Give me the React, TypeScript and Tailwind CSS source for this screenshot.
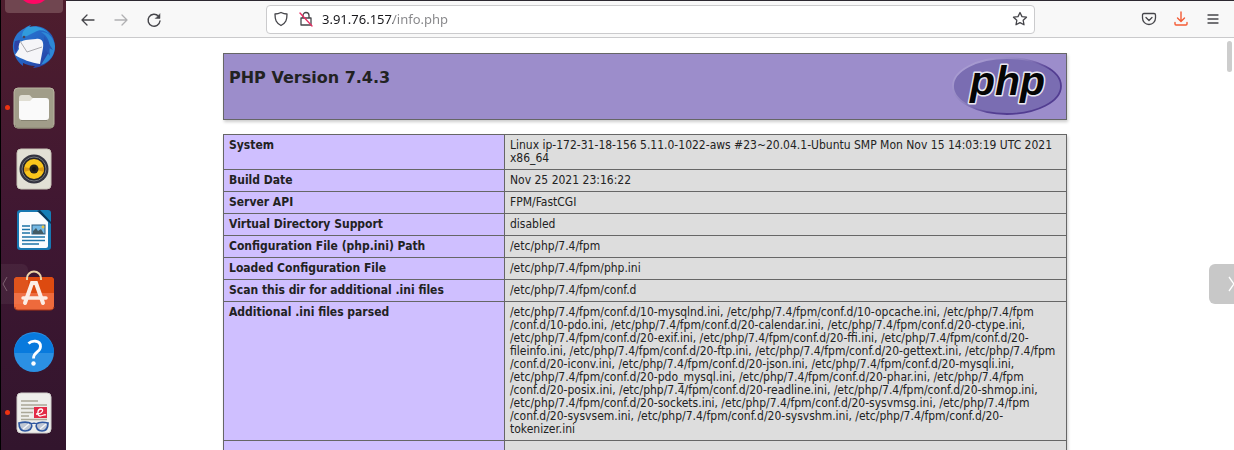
import React from "react";

type Row = { name: string; value: React.ReactNode };

const ROWS: Row[] = [
  { name: "System", value: "Linux ip-172-31-18-156 5.11.0-1022-aws #23~20.04.1-Ubuntu SMP Mon Nov 15 14:03:19 UTC 2021 x86_64" },
  { name: "Build Date", value: "Nov 25 2021 23:16:22" },
  { name: "Server API", value: "FPM/FastCGI" },
  { name: "Virtual Directory Support", value: "disabled" },
  { name: "Configuration File (php.ini) Path", value: "/etc/php/7.4/fpm" },
  { name: "Loaded Configuration File", value: "/etc/php/7.4/fpm/php.ini" },
  { name: "Scan this dir for additional .ini files", value: "/etc/php/7.4/fpm/conf.d" },
];

const INI_LINES = [
  "/etc/php/7.4/fpm/conf.d/10-mysqlnd.ini, /etc/php/7.4/fpm/conf.d/10-opcache.ini, /etc/php/7.4/fpm",
  "/conf.d/10-pdo.ini, /etc/php/7.4/fpm/conf.d/20-calendar.ini, /etc/php/7.4/fpm/conf.d/20-ctype.ini,",
  "/etc/php/7.4/fpm/conf.d/20-exif.ini, /etc/php/7.4/fpm/conf.d/20-ffi.ini, /etc/php/7.4/fpm/conf.d/20-",
  "fileinfo.ini, /etc/php/7.4/fpm/conf.d/20-ftp.ini, /etc/php/7.4/fpm/conf.d/20-gettext.ini, /etc/php/7.4/fpm",
  "/conf.d/20-iconv.ini, /etc/php/7.4/fpm/conf.d/20-json.ini, /etc/php/7.4/fpm/conf.d/20-mysqli.ini,",
  "/etc/php/7.4/fpm/conf.d/20-pdo_mysql.ini, /etc/php/7.4/fpm/conf.d/20-phar.ini, /etc/php/7.4/fpm",
  "/conf.d/20-posix.ini, /etc/php/7.4/fpm/conf.d/20-readline.ini, /etc/php/7.4/fpm/conf.d/20-shmop.ini,",
  "/etc/php/7.4/fpm/conf.d/20-sockets.ini, /etc/php/7.4/fpm/conf.d/20-sysvmsg.ini, /etc/php/7.4/fpm",
  "/conf.d/20-sysvsem.ini, /etc/php/7.4/fpm/conf.d/20-sysvshm.ini, /etc/php/7.4/fpm/conf.d/20-",
  "tokenizer.ini",
];

function ThunderbirdIcon() {
  return (
    <svg viewBox="0 1 44 44" className="size-11" aria-hidden="true">
      <defs>
        <linearGradient id="tb" x1="0" y1="0" x2="1" y2="1">
          <stop offset="0" stopColor="#2d7fd6" />
          <stop offset="0.5" stopColor="#2464c4" />
          <stop offset="1" stopColor="#2a2f92" />
        </linearGradient>
      </defs>
      <path d="M19 1c-3 1-5 2-6 3C4 8 0 16 1 25c1 8 6 14 10 17l0-3c4 2 8 3 12 3l-2 2c13-1 22-10 22-21C43 11 35 3 24 2l-7 1z" fill="url(#tb)" />
      <path d="M19 1c-6 3-9 6-9 12l5-1 8-4c5-3 11-2 15 3-4-6-12-10-21-8z" fill="#319bdc" />
      <path d="M29 8c7 4 10 11 8 20l-8 13c9-3 14-10 14-19-1-8-6-14-14-14z" fill="#2e88d6" />
      <path d="M32 12l9 14-4-2 1 8-6-8z" fill="#2756b6" />
      <path d="M6 20c5-5 10-4 18-5 6-1 8 3 7 9l-3 16C20 39 9 35 3 31l4-6z" fill="#f5f5f8" />
      <path d="M8 17l7 11 15-5" fill="none" stroke="#aaa9ae" strokeWidth="1" />
      <path d="M3 17c-2 7 0 10 1 12l3-8 1-5z" fill="#2d43a5" />
      <circle cx="12" cy="13" r="1.3" fill="#4a4257" />
    </svg>
  );
}

function FilesIcon() {
  return (
    <svg viewBox="0 0 42 42" className="size-[42px]" aria-hidden="true">
      <rect x="1" y="1" width="40" height="40" rx="4" fill="#a19d89" stroke="#b9b5a1" />
      <path d="M2 38c0 2 1 3 3 3h32c2 0 4-1 4-3" fill="none" stroke="#817c69" />
      <rect x="6" y="11" width="30" height="22" rx="3" fill="#fafafa" />
      <path d="M6 14V11c0-2 1-3 3-3h7c2 0 2 3 4 3l-3 3z" fill="#e0ded3" />
      <path d="M8 33.500h26" stroke="#858170" />
    </svg>
  );
}

function RhythmboxIcon() {
  return (
    <svg viewBox="0 0 36 42" className="h-[42px] w-9" aria-hidden="true">
      <rect x="1" y="1" width="34" height="40" rx="4" fill="#e2e0d5" stroke="#c8c5b8" />
      <circle cx="18" cy="21" r="14.500" fill="#343440" />
      <circle cx="18" cy="21" r="12" fill="#25252a" stroke="#74777d" strokeWidth="1" />
      <circle cx="18" cy="21" r="10" fill="#fac51b" />
      <path d="M18 21L8 19v5z" fill="#d99912" />
      <path d="M18 21l10-2v5z" fill="#d99912" />
      <circle cx="18" cy="21" r="4.500" fill="#24201c" />
      <circle cx="18" cy="21" r="2" fill="#14100f" />
    </svg>
  );
}

function WriterIcon() {
  return (
    <svg viewBox="0 0 36 42" className="h-[42px] w-9" aria-hidden="true">
      <path d="M4 1h20l11 11v26c0 2-1 3-3 3H4c-2 0-3-1-3-3V4c0-2 1-3 3-3z" fill="#1878b2" />
      <path d="M5 3h18l9 10v24c0 1-1 2-2 2H5c-1 0-2-1-2-2V5c0-1 1-2 2-2z" fill="#fafcff" />
      <path d="M23 1l12 12V4c0-2-1-3-3-3z" fill="#147fb7" />
      <path d="M21 2l14 13v-2L24 1z" fill="#09375a" />
      <g stroke="#1d73a8" strokeWidth="1.600">
        <path d="M6 17h8M6 20.500h8M6 24h8M6 28h23M6 31.500h23M6 35h17" />
      </g>
      <rect x="16" y="16" width="13" height="9" fill="#74b8e4" stroke="#265b80" />
      <path d="M17 25v-3l3-3 2 3 3-2 3 5z" fill="#435b65" />
      <circle cx="27" cy="18" r="1.400" fill="#efc63f" />
    </svg>
  );
}

function SoftwareIcon() {
  return (
    <svg viewBox="0 0 42 42" className="size-[42px]" aria-hidden="true">
      <rect x="1" y="7" width="40" height="33" rx="4" fill="#ee6a3c" />
      <path d="M1 11c0-3 1-4 4-4h32c3 0 4 1 4 4v12H1z" fill="#dd4a10" />
      <path d="M2 37c0 2 1 3 3 3h32c2 0 4-1 4-3" stroke="#aa3517" fill="none" />
      <path d="M14 10V8a7 6.500 0 0 1 14 0v2" stroke="#ead3a7" strokeWidth="2" fill="none" />
      <path d="M12 33l7-20h4l7 20" stroke="#fcece4" strokeWidth="4" fill="none" strokeLinecap="round" />
      <path d="M10 28h23" stroke="#fcece4" strokeWidth="3.500" fill="none" strokeLinecap="round" />
    </svg>
  );
}

function HelpIcon() {
  return (
    <svg viewBox="0 0 42 42" className="size-[42px]" aria-hidden="true">
      <circle cx="21" cy="21" r="20" fill="#2b90e3" />
      <path d="M1 22a20 20 0 0 1 40 0z" fill="#087add" />
      <path d="M15.500 12.500c3-3 12-4 12 3 0 6-7 5-7 12" stroke="white" strokeWidth="2.800" fill="none" />
      <circle cx="20.500" cy="32.500" r="2.200" fill="white" />
    </svg>
  );
}

function ViewerIcon() {
  return (
    <svg viewBox="0 0 36 42" className="h-[42px] w-9" aria-hidden="true">
      <rect x="1" y="1" width="34" height="40" rx="4" fill="#eeeeeb" stroke="#d1cfcc" />
      <path d="M5 9h17M5 13h26M5 16.500h26M5 20.500h12M5 24h8M5 27.500h26" stroke="#aaa797" strokeWidth="1.600" />
      <rect x="18" y="15" width="13" height="11" fill="#e22b46" />
      <path d="M20 22c7 0 8-5 5-5-4 0-4 7-1 7 3 0 4-2 6-1" stroke="white" strokeWidth="1.300" fill="none" />
      <path d="M3 31c0 6 2 8 6 8 5 0 7-3 7-7 1-1 3-1 4 0 0 4 2 7 6 7 4 0 6-3 6-8-4-1-9-1-12 1h-4c-3-2-9-2-13-1z" stroke="#2f57a0" strokeWidth="1.700" fill="#bfc6d3" />
      <path d="M16 32c1 3 3 3 4 0z" fill="#eeeeeb" />
      <path d="M7 37l6-5M24 37l6-5" stroke="#f2f5fa" strokeWidth="1.500" />
    </svg>
  );
}

const DOCK = [
  { label: "Thunderbird Mail", icon: <ThunderbirdIcon />, running: false },
  { label: "Files", icon: <FilesIcon />, running: true },
  { label: "Rhythmbox", icon: <RhythmboxIcon />, running: false },
  { label: "LibreOffice Writer", icon: <WriterIcon />, running: false },
  { label: "Ubuntu Software", icon: <SoftwareIcon />, running: false },
  { label: "Help", icon: <HelpIcon />, running: false },
  { label: "Document Viewer", icon: <ViewerIcon />, running: true },
];

function Dock() {
  return (
    <nav aria-label="Dock" className="relative w-[66px] shrink-0 overflow-hidden border-l border-black bg-linear-to-b from-[#4e1d2d] via-[#3f1732] to-[#32152d]">
      <div className="ml-1 flex h-[13px] w-[58px] items-end justify-center overflow-hidden rounded-b-sm bg-[#704650]">
        <svg viewBox="0 0 30 13" className="h-[13px] w-[30px]" aria-hidden="true">
          <path d="M1-7a14 11 0 0 0 28 0z" fill="#ff0764" />
        </svg>
      </div>
      <div className="flex flex-col pt-px">
        {DOCK.map((item) => (
          <button key={item.label} type="button" aria-label={item.label} className="relative flex h-[61px] w-full items-center justify-center pt-1">
            {item.running && <span className="absolute left-1 size-[5px] rounded-full bg-[#ee3311]" />}
            {item.icon}
          </button>
        ))}
      </div>
      <button type="button" aria-label="Previous" className="absolute top-[264px] left-0 h-10 w-[27px] rounded-r-md bg-white/5">
        <svg viewBox="0 0 27 40" className="h-10 w-[27px]" aria-hidden="true">
          <path d="M6 13l-4 7 4 7" stroke="#7d6170" fill="none" />
        </svg>
      </button>
    </nav>
  );
}

const iconProps = { fill: "none", stroke: "currentColor", strokeLinecap: "round", strokeLinejoin: "round" } as const;

function Toolbar() {
  return (
    <header className="flex h-[38px] shrink-0 items-center border-t border-b border-t-[#2c2830] border-b-[#cacacc] bg-[#f8f8f8] pr-[13px] pl-3 text-[#45454a]">
      <div className="flex w-[188px] shrink-0 gap-[13px] pt-px">
        <button type="button" aria-label="Back" className="grid size-5 place-items-center">
          <svg viewBox="0 0 16 16" className="size-4" strokeWidth="1.300" {...iconProps}><path d="M14 8H2M7 3L2 8l5 5" /></svg>
        </button>
        <button type="button" aria-label="Forward" className="grid size-5 place-items-center text-[#b0b0b2]">
          <svg viewBox="0 0 16 16" className="size-4" strokeWidth="1.300" {...iconProps}><path d="M2 8h12M9 3l5 5-5 5" /></svg>
        </button>
        <button type="button" aria-label="Reload" className="grid size-5 place-items-center">
          <svg viewBox="0 0 16 16" className="size-4" strokeWidth="1.400" {...iconProps}><path d="M12.500 4.200A6 6 0 1 0 14 9" /><path d="M14 2v4.500H9.500z" fill="currentColor" strokeWidth="0.500" /></svg>
        </button>
      </div>
      <div className="flex h-[29px] w-[769px] min-w-0 items-center rounded border border-[#cbcbcd] bg-white px-[6px]">
        <svg viewBox="0 0 16 16" className="size-4 shrink-0" strokeWidth="1.300" {...iconProps}><path d="M8 1.500c2 1 4 1.500 6 1.500 0 6-1 9-6 11.500C3 12 2 9 2 3c2 0 4-.5 6-1.500z" /></svg>
        <svg viewBox="0 0 16 16" className="ml-[9px] size-4 shrink-0" strokeWidth="1.300" {...iconProps}><path d="M5 7V4.500a3 3 0 0 1 6 0V7M3 7h10v7H3z" /><path d="M2 2l12 13" stroke="#e82c62" /></svg>
        <label htmlFor="url" aria-label="Address" className="ml-2 flex min-w-0 flex-1">
          <input id="url" type="text" defaultValue="3.91.76.157/info.php" className="h-6 w-full bg-[linear-gradient(to_right,#18181c_71px,#858588_71px)] bg-clip-text font-['Noto_Sans',sans-serif] text-[13px] leading-6 text-transparent outline-none" />
        </label>
        <button type="button" aria-label="Bookmark" className="grid size-4 place-items-center">
          <svg viewBox="0 0 16 16" className="size-4" strokeWidth="1.300" {...iconProps}><path d="M8 1.500l2 4.100 4.500.6-3.300 3.100.8 4.500-4-2.200-4 2.200.8-4.500L1.500 6.200l4.500-.6z" /></svg>
        </button>
      </div>
      <div className="ml-auto flex items-center gap-4">
        <button type="button" aria-label="Save to Pocket" className="grid size-4 place-items-center">
          <svg viewBox="0 0 16 16" className="size-4" strokeWidth="1.300" {...iconProps}><path d="M3 2.500h10c1 0 1.500.5 1.500 1.500v3a6.500 6.500 0 0 1-13 0V4c0-1 .5-1.500 1.500-1.500zM5 6.500l3 3 3-3" /></svg>
        </button>
        <button type="button" aria-label="Downloads" className="grid size-4 place-items-center text-[#f45b35]">
          <svg viewBox="0 0 16 16" className="size-4" strokeWidth="1.400" {...iconProps}><path d="M8 1v9M4.500 7L8 10.500 11.500 7M2 11.500V13c0 .8.500 1 1 1h10c.5 0 1-.2 1-1v-1.500" /></svg>
        </button>
        <button type="button" aria-label="Menu" className="grid size-4 place-items-center">
          <svg viewBox="0 0 16 16" className="size-4" strokeWidth="1.300" {...iconProps}><path d="M3 4h10M3 8h10M3 12h10" /></svg>
        </button>
      </div>
    </header>
  );
}

function PhpLogo() {
  return (
    <svg viewBox="0 0 110 58" className="h-[58px] w-[110px] shrink-0" role="img" aria-label="PHP logo">
      <defs>
        <linearGradient id="rim" x1="0" y1="0" x2="1" y2="0.7">
          <stop offset="0" stopColor="#b7abdc" />
          <stop offset="0.45" stopColor="#8d80be" />
          <stop offset="0.7" stopColor="#523d91" />
        </linearGradient>
      </defs>
      <ellipse cx="55" cy="29" rx="54" ry="28" fill="#7a6db2" stroke="url(#rim)" strokeWidth="1.800" />
      <text x="18" y="38" fontFamily="Liberation Sans, sans-serif" fontWeight="700" fontStyle="italic" fontSize="41" fill="#050505" stroke="#e9e6f0" strokeWidth="3" strokeLinejoin="round" paintOrder="stroke">php</text>
    </svg>
  );
}

const thClass = "w-1/3 border border-[#666666] bg-[#cfbfff] px-[5px] text-left align-top font-bold";
const tdClass = "w-2/3 border border-[#666666] bg-[#dddddd] px-[5px] align-top";

export default function App() {
  return (
    <div className="flex h-screen overflow-hidden bg-white">
      <Dock />
      <div className="flex min-w-0 flex-1 flex-col">
        <Toolbar />
        <div className="relative min-h-0 flex-1 overflow-hidden pr-[10px]">
          <main className="mx-auto w-[844px] max-w-full pt-[15px] font-['DejaVu_Sans',sans-serif] text-[#222222]">
            <div className="flex h-[67px] items-start justify-between border border-[#666666] bg-[#9c8dcb] pt-[3px] pr-1 pl-[5px] shadow-[1px_2px_3px_#cccccc]">
              <h1 className="pt-[11px] text-base leading-5 font-bold">PHP Version 7.4.3</h1>
              <PhpLogo />
            </div>
            <table className="mt-[14px] w-full border-collapse font-['DejaVu_Sans_Condensed','DejaVu_Sans',sans-serif] text-xs leading-[13px] shadow-[1px_2px_3px_#cccccc]">
              <tbody>
                {ROWS.map((row) => (
                  <tr key={row.name}>
                    <th scope="row" className={`${thClass} py-1`}>{row.name}</th>
                    <td className={`${tdClass} py-1`}>{row.value}</td>
                  </tr>
                ))}
                <tr>
                  <th scope="row" className={`${thClass} py-1`}>Additional .ini files parsed</th>
                  <td className={`${tdClass} py-1 whitespace-nowrap`}>
                    {INI_LINES.map((line) => <div key={line}>{line}</div>)}
                  </td>
                </tr>
                <tr className="h-[22px]">
                  <th scope="row" className={thClass} />
                  <td className={tdClass} />
                </tr>
              </tbody>
            </table>
          </main>
          <div className="absolute top-[3px] right-[2px] h-[31px] w-[5px] rounded-full bg-[#cdcdcd]" />
          <button type="button" aria-label="Next" className="absolute top-[226px] right-0 h-10 w-[25px] rounded-l-md bg-[#c8c8c8]">
            <svg viewBox="0 0 25 40" className="h-10 w-[25px]" aria-hidden="true"><path d="M20 13l5 7-5 7" fill="none" stroke="white" strokeWidth="1.300" /></svg>
          </button>
        </div>
      </div>
    </div>
  );
}
